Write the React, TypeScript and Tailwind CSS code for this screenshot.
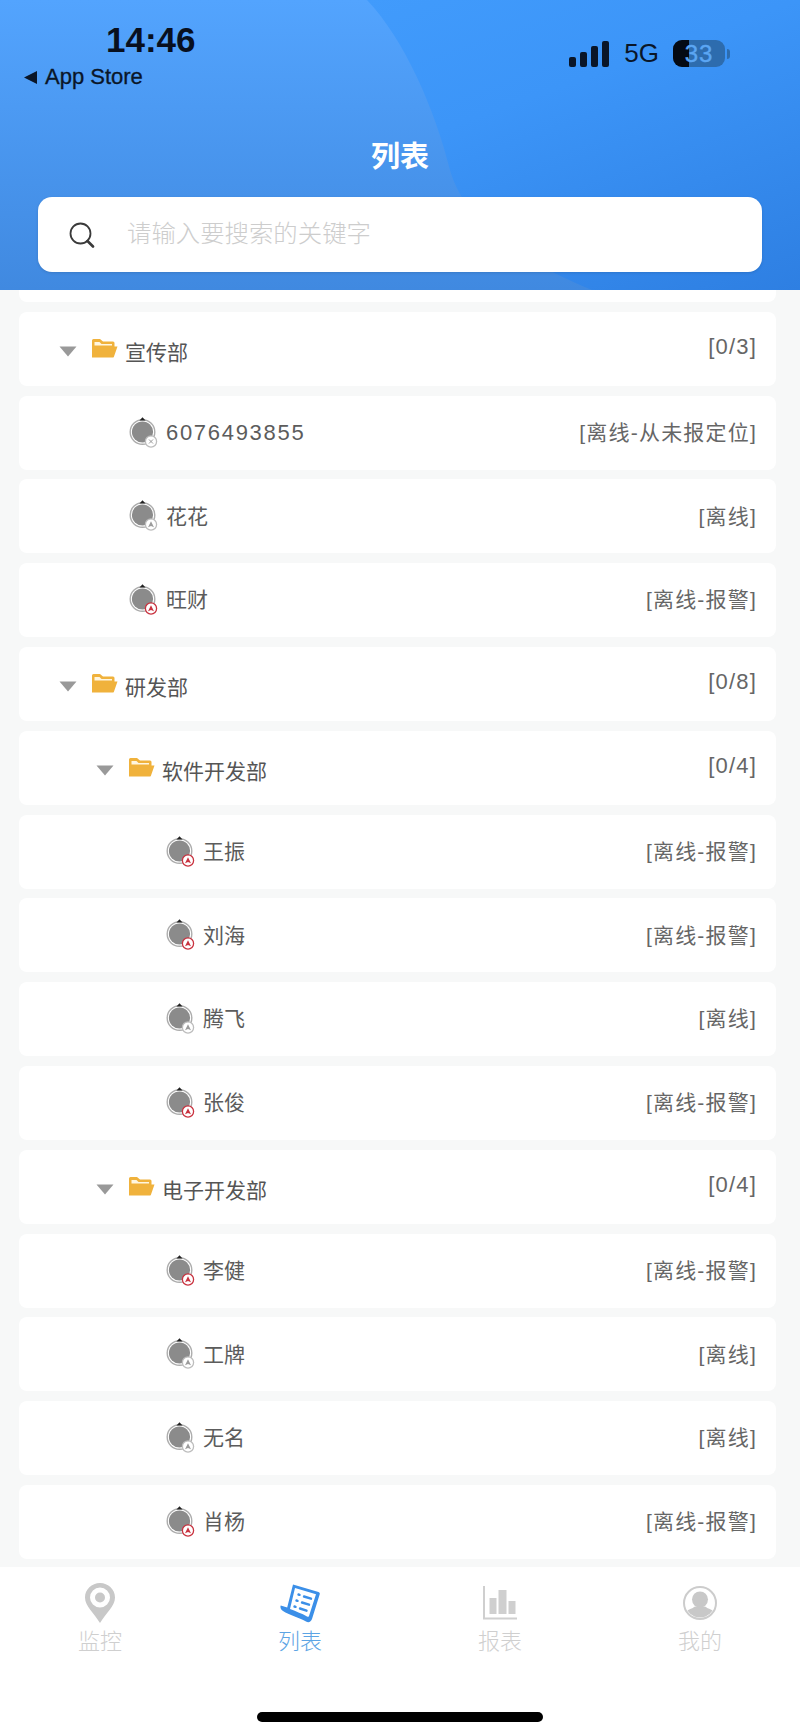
import React from "react";

const cjk = "font-['Liberation_Sans','Noto_Sans_CJK_SC',sans-serif]";

function Caret() {
  return (
    <svg width="18" height="11" viewBox="0 0 18 11" className="shrink-0">
      <path d="M0.5 0.5H17.5L9 10.5Z" fill="#999999" />
    </svg>
  );
}

function Folder() {
  return (
    <svg width="27" height="20" viewBox="0 0 27 20" className="shrink-0">
      <path d="M1 2.500A1.500 1.500 0 0 1 2.500 1H9L12 3.500H22A1.500 1.500 0 0 1 23.500 5V9H1Z" fill="#f0b23c" />
      <path d="M3.500 4H8.500L10.500 6H21V7.500H3.500Z" fill="#fff6e0" />
      <path d="M1 8.500H26.500L23 18.500A1 1 0 0 1 22 19.500H1Z" fill="#f0b23c" />
    </svg>
  );
}

function Device({ kind }: { kind: "x" | "a" | "alarm" }) {
  const red = kind === "alarm";
  const badge = red ? "#c9323f" : "#bdbdbd";
  return (
    <svg width="30" height="32" viewBox="0 0 30 32" className="shrink-0">
      <circle cx="13.500" cy="15" r="12.300" fill="#ffffff" stroke="#adadad" strokeWidth="1.400" />
      <circle cx="13.500" cy="15" r="10.600" fill="#8b8b8b" />
      <path d="M10.500 3.500L13.500 0.300L16.500 3.500Z" fill="#222222" />
      <circle cx="22" cy="24.500" r="5.600" fill="#ffffff" stroke={badge} strokeWidth="1.300" />
      {kind === "x" ? (
        <path d="M20 22.500L24 26.500M24 22.500L20 26.500" stroke="#9a9a9a" strokeWidth="1" />
      ) : (
        <path d="M22 21.300L25 27.300L22 26L19 27.300Z" fill={red ? "#c9323f" : "#9c9c9c"} />
      )}
    </svg>
  );
}

function GroupRow({ name, count, level }: { name: string; count: string; level: 1 | 2 }) {
  return (
    <div className="h-[74px] rounded-lg bg-white flex items-center justify-between pr-[19px]">
      <div className={`flex items-center ${level === 1 ? "pl-[40px]" : "pl-[77px]"}`}>
        <div className="mt-[5px]"><Caret /></div>
        <div className="ml-[14px] mt-[-1px]"><Folder /></div>
        <span className="ml-[7px] mt-[7px] text-[21px] text-[#555555]">{name}</span>
      </div>
      <span className="mt-[-4px] text-[22px] tracking-[1.200px] text-[#666666]">{count}</span>
    </div>
  );
}

function DeviceRow({ name, status, kind, level, digits }: { name: string; status: string; kind: "x" | "a" | "alarm"; level: 1 | 2; digits?: boolean }) {
  return (
    <div className="h-[74px] rounded-lg bg-white flex items-center justify-between pr-[19px]">
      <div className={`flex items-center ${level === 1 ? "pl-[110px]" : "pl-[147px]"}`}>
        <Device kind={kind} />
        <span className={`ml-[7px] text-[#5c5c5c] ${digits ? "text-[22px] tracking-[1.700px]" : "text-[21px]"}`}>{name}</span>
      </div>
      <span className="text-[21px] tracking-[1.200px] text-[#666666]">{status}</span>
    </div>
  );
}

function Pin() {
  return (
    <svg width="30" height="40" viewBox="0 0 30 40">
      <path fillRule="evenodd" d="M15 40C9 30 0 23 0 14.500C0 6.500 6.700 0 15 0S30 6.500 30 14.500C30 23 21 30 15 40ZM15 4.500A10 10 0 1 0 15 24.500A10 10 0 1 0 15 4.500Z" fill="#c8c8c8" />
      <circle cx="15" cy="14.500" r="5" fill="#c8c8c8" />
    </svg>
  );
}

function ListIcon() {
  return (
    <svg width="40" height="39" viewBox="0 0 40 39">
      <path d="M13 0.500L38.500 8C39.700 8.400 40 9.300 39.700 10.300L32 35C31 38 28.500 39 26 37.500C19 33.500 9 31 3 27C0.500 25.500 0 23 0.700 21.500L7.200 23.500Z" fill="#3b8fe8" />
      <path d="M15 4L36 10.300L29 32C28.500 33 28 33 27 32.500C22 29.500 15 27 10 25Z" fill="#ffffff" />
      <g stroke="#3b8fe8" strokeWidth="2.400" strokeLinecap="round">
        <path d="M18.500 10.500L19.500 10.800M24 12.500L31 14.700" />
        <path d="M16.500 16.500L17.500 16.800M22 18.500L29 20.700" />
        <path d="M14.500 22.500L15.500 22.800M20 24.500L26.500 26.700" />
      </g>
    </svg>
  );
}

function BarsIcon() {
  return (
    <svg width="34" height="34" viewBox="0 0 34 34">
      <path d="M1 0V32.500H34" fill="none" stroke="#cfcfcf" strokeWidth="2" />
      <rect x="6.500" y="12" width="7" height="16" fill="#cfcfcf" />
      <rect x="15.500" y="4" width="8" height="24" fill="#cfcfcf" />
      <rect x="25.500" y="15" width="7" height="13" fill="#cfcfcf" />
    </svg>
  );
}

function UserIcon() {
  return (
    <svg width="34" height="34" viewBox="0 0 34 34">
      <defs>
        <clipPath id="u"><circle cx="17" cy="17" r="14.500" /></clipPath>
      </defs>
      <circle cx="17" cy="17" r="16" fill="#ffffff" stroke="#cccccc" strokeWidth="2" />
      <g clipPath="url(#u)">
        <circle cx="17" cy="13.500" r="8" fill="#c8c8c8" />
        <path d="M2 34V27C3 24 9 23 12 20.500H22C25 23 31 24 32 27V34Z" fill="#c8c8c8" />
      </g>
    </svg>
  );
}

function Tab({ label, active, icon }: { label: string; active?: boolean; icon: React.ReactNode }) {
  return (
    <div className="flex-1 flex flex-col items-center">
      <div className="h-[40px] flex items-center justify-center">{icon}</div>
      <span className={`mt-[6px] text-[22px] leading-[26px] font-light ${active ? "text-[#5ca4e4]" : "text-[#cfcfcf]"}`}>{label}</span>
    </div>
  );
}

export default function App() {
  return (
    <div className={`w-[800px] h-[1734px] flex flex-col overflow-hidden bg-[#f7f8f8] ${cjk}`}>
      <header className="relative h-[290px] shrink-0 overflow-hidden bg-gradient-to-br from-[#45a0ff] via-[#3c95f8] to-[#2e7fe2]">
        <svg className="absolute inset-0" width="800" height="290" viewBox="0 0 800 290">
          <defs>
            <linearGradient id="blob" x1="0" y1="0" x2="0" y2="1">
              <stop offset="0" stopColor="#53a4fe" />
              <stop offset="1" stopColor="#4089e0" />
            </linearGradient>
          </defs>
          <path d="M0 0H367C405 40 435 110 450 170C465 225 530 265 592 290H0Z" fill="url(#blob)" />
        </svg>
        <div className="relative flex flex-col h-full">
          <div className="flex justify-between h-[140px] shrink-0">
            <div className="flex flex-col">
              <span className="ml-[106px] mt-[20px] text-[35px] leading-[40px] font-bold text-[#08101f]">14:46</span>
              <div className="ml-[24px] mt-[4px] flex items-center">
                <svg width="13" height="13" viewBox="0 0 13 13" className="shrink-0"><path d="M13 0V13L0 6.500Z" fill="#0a1628" /></svg>
                <span className="ml-[8px] text-[22px] leading-[26px] text-[#0a1628] [-webkit-text-stroke:0.3px_#0a1628]">App Store</span>
              </div>
            </div>
            <div className="flex items-center h-[27px] mt-[40px] mr-[70px]">
              <svg width="40" height="26" viewBox="0 0 40 26" className="shrink-0">
                <rect x="0" y="16" width="7" height="10" rx="2" fill="#0a1628" />
                <rect x="11" y="11" width="7" height="15" rx="2" fill="#0a1628" />
                <rect x="22" y="5" width="7" height="21" rx="2" fill="#0a1628" />
                <rect x="33" y="0" width="7" height="26" rx="2" fill="#0a1628" />
              </svg>
              <span className="ml-[15px] text-[26px] leading-[27px] text-[#0a1628]">5G</span>
              <div className="relative ml-[14px] w-[52px] h-[27px] rounded-[9px] bg-[#2d6cae] overflow-hidden flex items-center justify-center">
                <div className="absolute left-0 top-0 bottom-0 w-[16px] bg-[#040a14]" />
                <span className="relative text-[24px] leading-[27px] tracking-[1px] text-[#5ba6f3] [-webkit-text-stroke:0.4px_#5ba6f3]">33</span>
              </div>
              <div className="ml-[2px] w-[3px] h-[10px] rounded-r-full bg-[#2d6cae]" />
            </div>
          </div>
          <div className="h-[57px] shrink-0 flex justify-center">
            <span className="text-[29px] leading-[34px] font-semibold text-white">列表</span>
          </div>
          <div className="mx-[38px] h-[75px] rounded-[14px] bg-white shadow-[0_1px_3px_rgba(0,0,0,0.12)] flex items-center pl-[31px]">
            <svg width="26" height="26" viewBox="0 0 26 26" className="shrink-0">
              <circle cx="11.500" cy="11.500" r="10" fill="none" stroke="#3a3a3a" strokeWidth="1.800" />
              <path d="M18.500 19L24 24.500" stroke="#3a3a3a" strokeWidth="2.600" strokeLinecap="round" />
            </svg>
            <span className="ml-[32px] text-[24.400px] text-[#cdcdcd] font-light">请输入要搜索的关键字</span>
          </div>
        </div>
      </header>

      <main className="flex-1 overflow-hidden pl-[19px] pr-[24px] flex flex-col gap-[9.800px]">
        <div className="h-[12px] shrink-0 rounded-b-lg bg-white" />
        <GroupRow name="宣传部" count="[0/3]" level={1} />
        <DeviceRow name="6076493855" status="[离线-从未报定位]" kind="x" level={1} digits />
        <DeviceRow name="花花" status="[离线]" kind="a" level={1} />
        <DeviceRow name="旺财" status="[离线-报警]" kind="alarm" level={1} />
        <GroupRow name="研发部" count="[0/8]" level={1} />
        <GroupRow name="软件开发部" count="[0/4]" level={2} />
        <DeviceRow name="王振" status="[离线-报警]" kind="alarm" level={2} />
        <DeviceRow name="刘海" status="[离线-报警]" kind="alarm" level={2} />
        <DeviceRow name="腾飞" status="[离线]" kind="a" level={2} />
        <DeviceRow name="张俊" status="[离线-报警]" kind="alarm" level={2} />
        <GroupRow name="电子开发部" count="[0/4]" level={2} />
        <DeviceRow name="李健" status="[离线-报警]" kind="alarm" level={2} />
        <DeviceRow name="工牌" status="[离线]" kind="a" level={2} />
        <DeviceRow name="无名" status="[离线]" kind="a" level={2} />
        <DeviceRow name="肖杨" status="[离线-报警]" kind="alarm" level={2} />
      </main>

      <footer className="h-[167px] shrink-0 bg-white flex flex-col">
        <div className="flex pt-[16px]">
          <Tab label="监控" icon={<Pin />} />
          <Tab label="列表" active icon={<ListIcon />} />
          <Tab label="报表" icon={<BarsIcon />} />
          <Tab label="我的" icon={<UserIcon />} />
        </div>
        <div className="mt-[57px] mx-auto w-[286px] h-[10px] rounded-full bg-black" />
      </footer>
    </div>
  );
}
